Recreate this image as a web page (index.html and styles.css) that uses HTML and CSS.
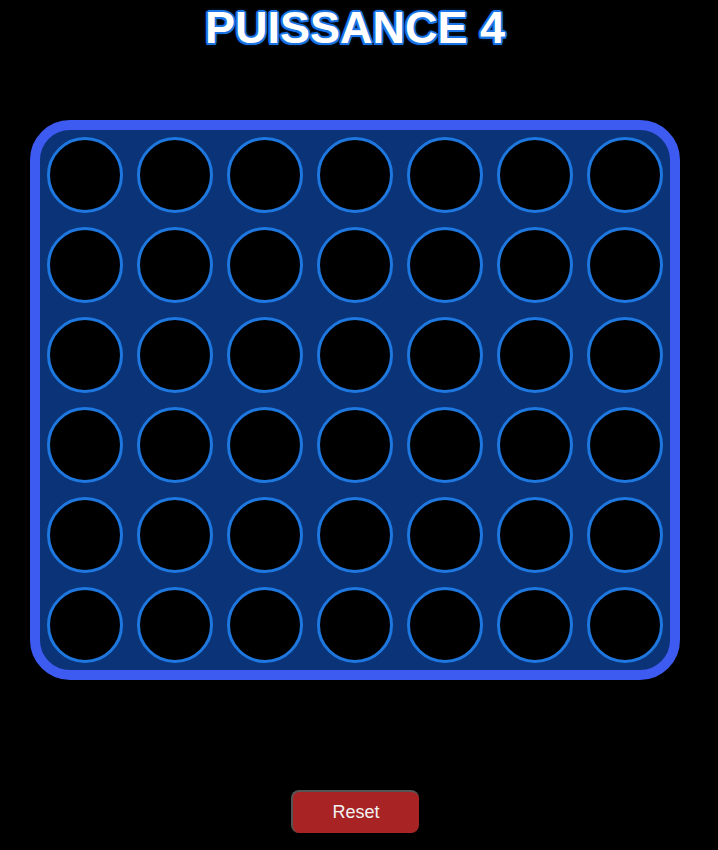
FILE: index.html
```html
<!DOCTYPE html>
<html lang="fr">
<head>
    <meta charset="UTF-8">
    <meta name="viewport" content="width=device-width, initial-scale=1.0">
    <title>Puissance 4</title>
    <link rel="stylesheet" href="styles.css">
</head>
<body>
    <h1 class="title">PUISSANCE 4</h1>
    <div class="board" id="board"></div>
    <button class="reset" id="reset">Reset</button>
    <script>
        const board = document.getElementById('board');
        for (let i = 0; i < 42; i++) {
            const cell = document.createElement('div');
            cell.className = 'cell';
            const hole = document.createElement('div');
            hole.className = 'hole';
            cell.appendChild(hole);
            board.appendChild(cell);
        }
    </script>
</body>
</html>
```

FILE: styles.css
```css
*{
    box-sizing: border-box;
    padding: 0px;
    margin: 0px;
}

html{
    font-family: "Liberation Sans", Arial, sans-serif;
    background-color: black;
}

body{
    display: flex;
    flex-direction: column;
    align-items: center;
    width: 710px;
    height: 850px;
    background-color: black;
}

.title{
    margin-top: 2px;
    font-size: 45px;
    font-weight: 700;
    line-height: 52px;
    color: white;
    text-shadow:
        2px 0 0 #1b74e4, -2px 0 0 #1b74e4, 0 2px 0 #1b74e4, 0 -2px 0 #1b74e4,
        1.5px 1.5px 0 #1b74e4, -1.5px 1.5px 0 #1b74e4, 1.5px -1.5px 0 #1b74e4, -1.5px -1.5px 0 #1b74e4,
        0 0 4px #1b74e4;
}

.board{
    display: grid;
    grid-template-columns: repeat(7, 90px);
    grid-template-rows: repeat(6, 90px);
    margin-top: 66px;
    background-color: #0b3378;
    border: 10px solid #3d5af1;
    border-radius: 40px;
}

.cell{
    display: flex;
    align-items: center;
    justify-content: center;
}

.hole{
    width: 76px;
    height: 76px;
    border-radius: 50%;
    border: 3px solid #1e78e0;
    background-color: black;
}

.reset{
    margin-top: 110px;
    width: 128px;
    height: 43px;
    font-family: "Liberation Sans", Arial, sans-serif;
    font-size: 18px;
    color: #f2f2f2;
    background-color: #a82424;
    border: none;
    border-top: 2px solid #555;
    border-left: 2px solid #555;
    border-radius: 8px;
    cursor: pointer;
}
```
